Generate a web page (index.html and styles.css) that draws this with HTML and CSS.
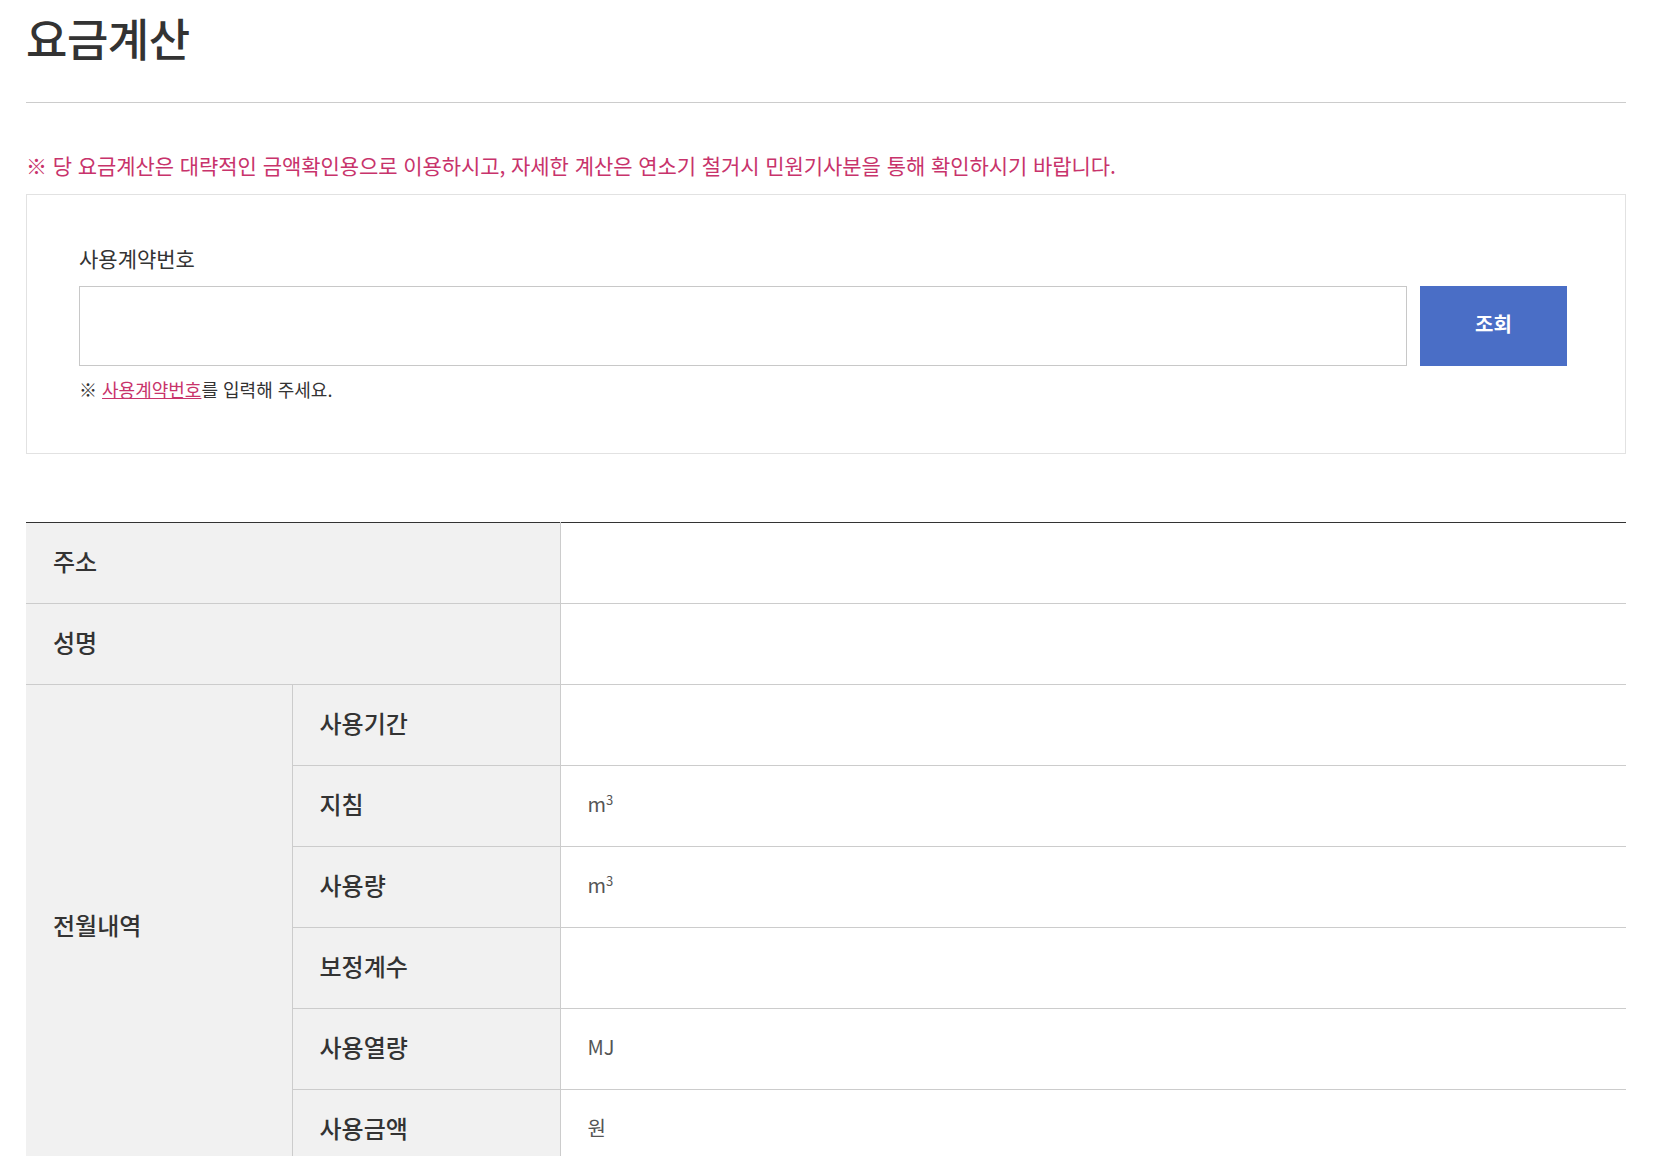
FILE: index.html
```html
<!DOCTYPE html>
<html lang="ko">
<head>
<meta charset="utf-8">
<title>요금계산</title>
<link rel="stylesheet" href="styles.css">
</head>
<body>
<div class="wrap">
  <div class="page-head">
    <h1 class="title">요금계산</h1>
  </div>
  <p class="notice">※ 당 요금계산은 대략적인 금액확인용으로 이용하시고, 자세한 계산은 연소기 철거시 민원기사분을 통해 확인하시기 바랍니다.</p>
  <div class="search-box">
    <label class="search-label" for="contract">사용계약번호</label>
    <div class="search-row">
      <input class="search-input" id="contract" type="text">
      <button class="search-btn" type="button">조회</button>
    </div>
    <p class="hint">※ <a class="hint-link" href="#">사용계약번호</a>를 입력해 주세요.</p>
  </div>
  <table class="result">
    <colgroup>
      <col class="c1">
      <col class="c2">
      <col class="c3">
    </colgroup>
    <tbody>
      <tr><th colspan="2">주소</th><td></td></tr>
      <tr><th colspan="2">성명</th><td></td></tr>
      <tr><th rowspan="6" class="group">전월내역</th><th class="sub">사용기간</th><td></td></tr>
      <tr><th class="sub">지침</th><td>m<sup>3</sup></td></tr>
      <tr><th class="sub">사용량</th><td>m<sup>3</sup></td></tr>
      <tr><th class="sub">보정계수</th><td></td></tr>
      <tr><th class="sub">사용열량</th><td>MJ</td></tr>
      <tr><th class="sub">사용금액</th><td>원</td></tr>
    </tbody>
  </table>
</div>
</body>
</html>
```
FILE: styles.css
```css
* { box-sizing: border-box; }
html, body { margin: 0; padding: 0; background: #fff; }
body {
  font-family: "Noto Sans CJK KR", "Noto Sans", sans-serif;
  color: #333;
}
.wrap {
  width: 1600px;
  margin-left: 26px;
}
.page-head {
  padding-top: 10px;
  padding-bottom: 36px;
  border-bottom: 1px solid #cccccc;
}
.title {
  margin: 0;
  font-size: 45px;
  line-height: 56px;
  font-weight: 500;
  color: #333;
  letter-spacing: -0.5px;
}
.notice {
  margin: 48px 0 15px;
  font-size: 21px;
  line-height: 28px;
  letter-spacing: -0.07px;
  color: #c8336b;
}
.search-box {
  border: 1px solid #e2e2e2;
  padding: 49px 58px 52px 52px;
}
.search-label {
  display: block;
  font-size: 21px;
  line-height: 28px;
  color: #333;
}
.search-row {
  display: flex;
  gap: 13px;
  margin-top: 14px;
}
.search-input {
  flex: 1;
  height: 80px;
  border: 1px solid #c8c8c8;
  background: #fff;
  font-size: 18px;
  padding: 0 16px;
  outline: none;
}
.search-btn {
  width: 147px;
  height: 80px;
  border: 0;
  background: #4a6ec6;
  color: #fff;
  font-family: inherit;
  font-size: 20px;
  font-weight: 700;
  line-height: 76px;
  padding: 0 0 4px;
  cursor: pointer;
}
.hint {
  margin: 11px 0 0;
  font-size: 18px;
  line-height: 24px;
  color: #333;
}
.hint-link {
  color: #c8336b;
  text-decoration: underline;
}
.result {
  margin-top: 68px;
  width: 1600px;
  border-collapse: collapse;
  table-layout: fixed;
  border-top: 1px solid #333;
}
.c1 { width: 266px; }
.c2 { width: 268px; }
.result th, .result td {
  height: 81px;
  border-bottom: 1px solid #cccccc;
  text-align: left;
  vertical-align: middle;
  padding: 0 0 6px 27px;
}
.result th {
  background: #f1f1f1;
  font-weight: 500;
  font-size: 24px;
  color: #333;
  border-right: 1px solid #cccccc;
}
.result th.group { border-bottom: 0; }
.result td {
  font-weight: 400;
  color: #555;
  font-size: 20px;
}
.result sup {
  font-size: 13px;
  vertical-align: 7px;
  line-height: 0;
}
```
